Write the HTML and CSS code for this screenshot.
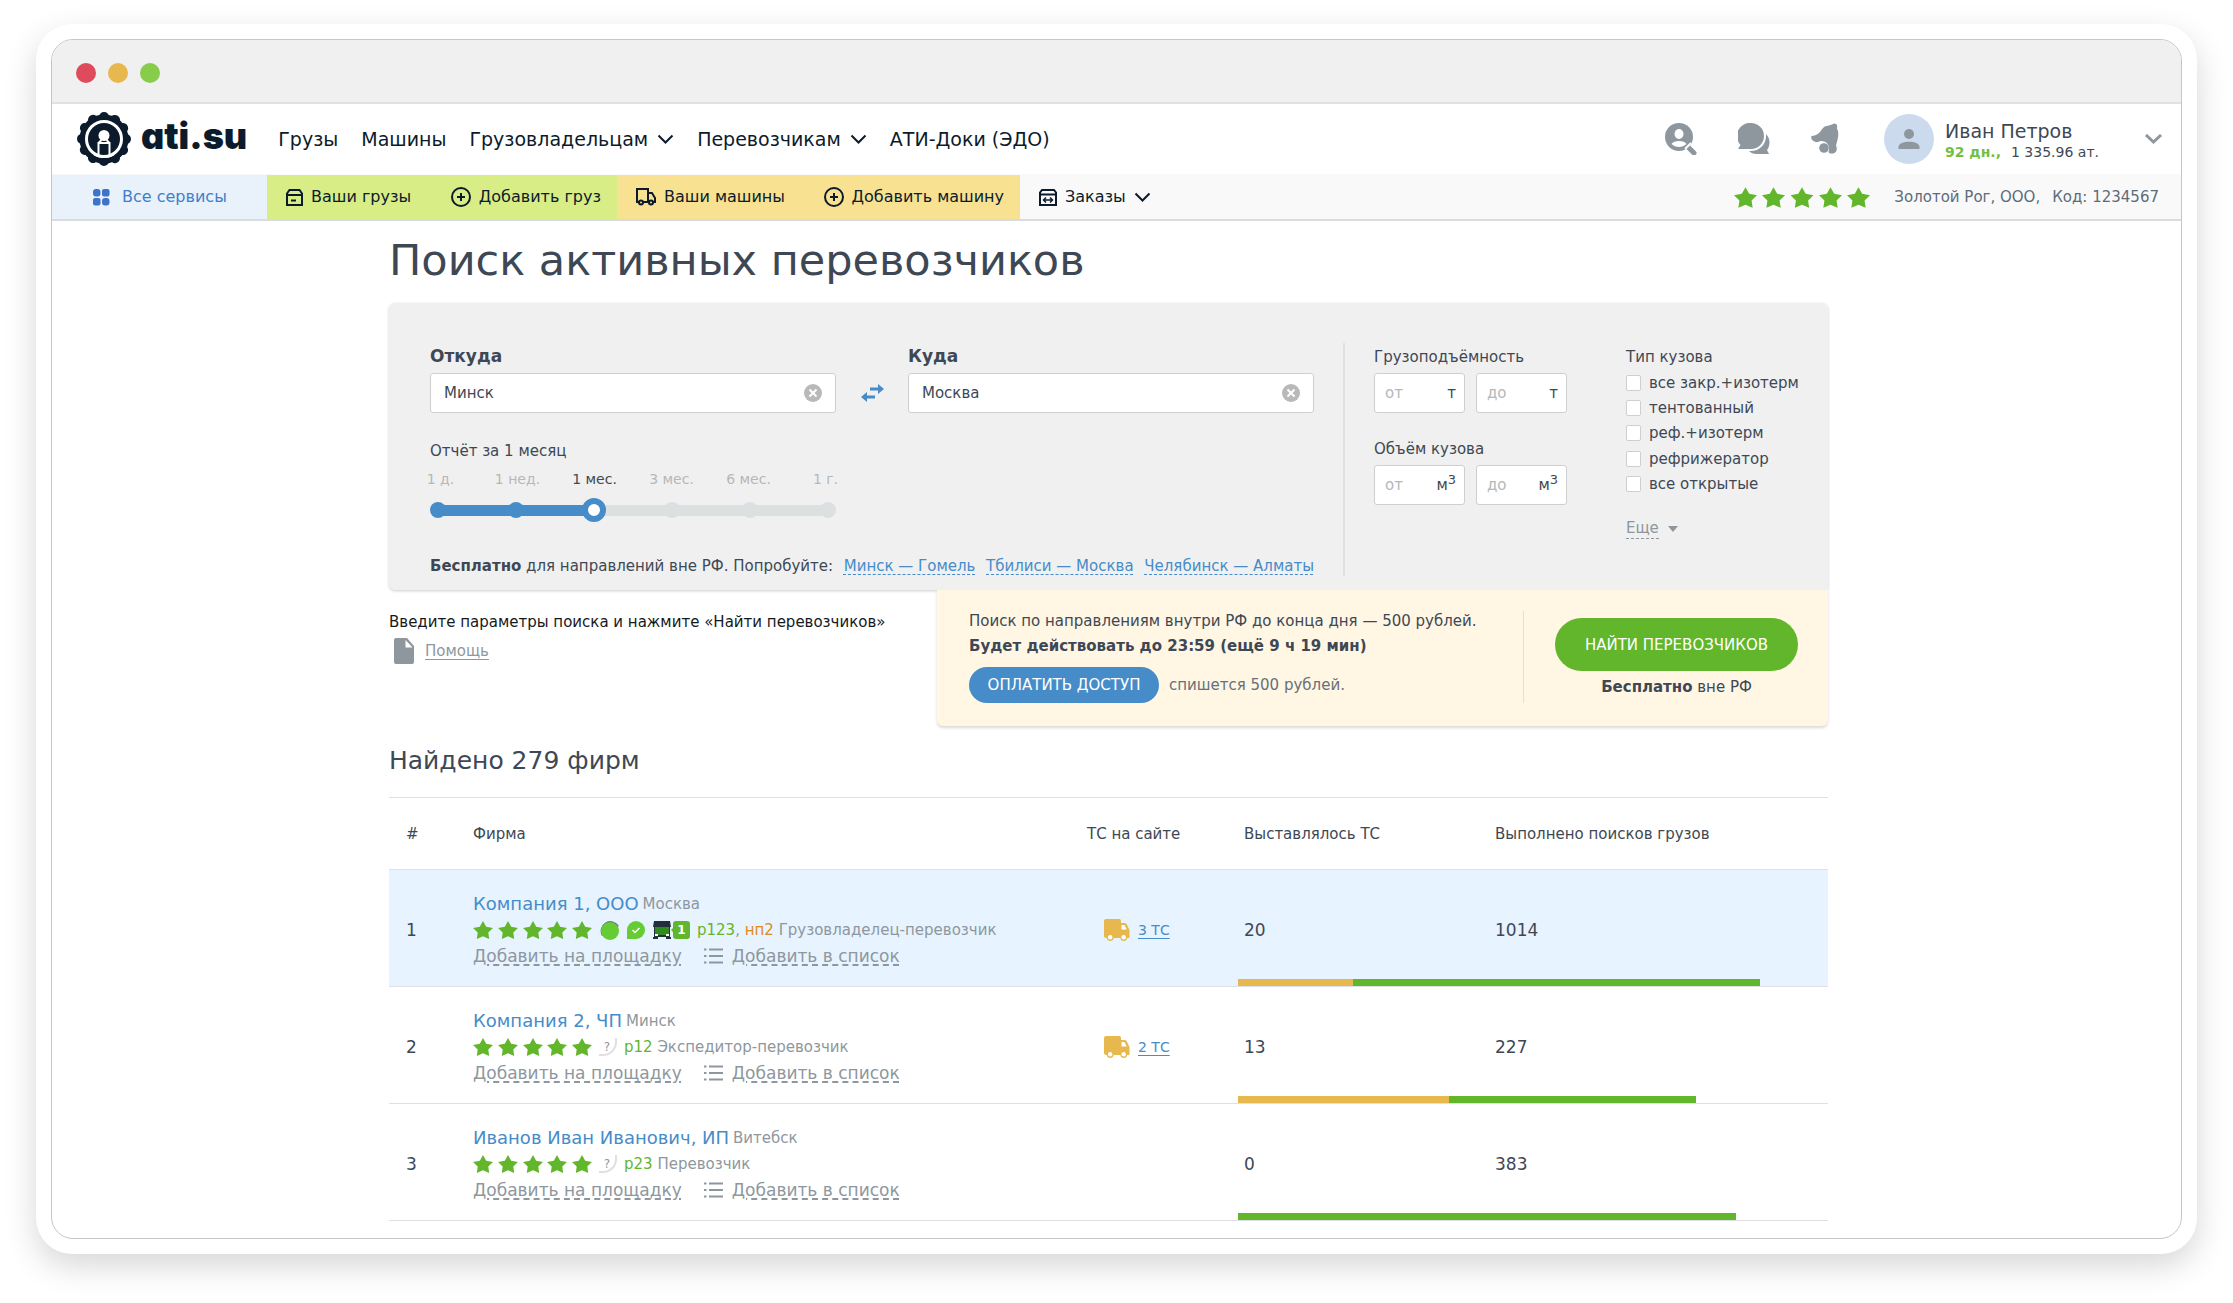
FILE: index.html
```
<!DOCTYPE html>
<html lang="ru">
<head>
<meta charset="utf-8">
<title>Поиск активных перевозчиков</title>
<link rel="stylesheet" href="styles.css">
</head>
<body>
<svg class="sprite" aria-hidden="true">
  <symbol id="star" viewBox="0 0 20 18"><path d="M10 0l3.200 5.800L20 7l-4.700 4.500L16.200 18 10 15.200 3.800 18l.9-6.500L0 7l6.800-1.200z"/></symbol>
  <symbol id="stars" viewBox="0 0 119 18"><use href="#star" width="20" height="18"/><use href="#star" x="25" width="20" height="18"/><use href="#star" x="50" width="20" height="18"/><use href="#star" x="74" width="20" height="18"/><use href="#star" x="99" width="20" height="18"/></symbol>
  <symbol id="chevron" viewBox="0 0 17 10"><path d="M1.500 1.500l7 7 7-7" fill="none" stroke="currentColor" stroke-width="2"/></symbol>
  <symbol id="plus" viewBox="0 0 20 20"><circle cx="10" cy="10" r="9" fill="none" stroke="currentColor" stroke-width="2"/><path d="M10 6v8M6 10h8" stroke="currentColor" stroke-width="2"/></symbol>
  <symbol id="clear" viewBox="0 0 18 18"><circle cx="9" cy="9" r="9" fill="#b9b9b9"/><path d="M5.500 5.500l7 7m0-7l-7 7" stroke="#fff" stroke-width="2"/></symbol>
  <symbol id="van" viewBox="0 0 26 22"><path d="M2 0h13a2 2 0 0 1 2 2v2h3.500c1.500 0 2 .8 2.700 2.200L25.500 11v7c0 .8-.5 1-1 1h-1.300a3.500 3.500 0 0 1-6.900 0H9.700a3.500 3.500 0 0 1-6.900 0H2a2 2 0 0 1-2-2V2a2 2 0 0 1 2-2z"/><path d="M17.500 6v4.500h5.200L20.500 6z" fill="#fff"/><circle cx="6.200" cy="18.300" r="2.200" fill="#fff"/><circle cx="19.700" cy="18.300" r="2.200" fill="#fff"/></symbol>
  <symbol id="list" viewBox="0 0 19 16"><path d="M5 1.500h14M5 8h14M5 14.500h14M0 1.500h2.500M0 8h2.500M0 14.500h2.500" stroke="currentColor" stroke-width="2"/></symbol>
</svg>
<div class="frame">
<div class="window">
  <div class="titlebar"><span class="dot dot-red"></span><span class="dot dot-yellow"></span><span class="dot dot-green"></span></div>

  <header class="header">
    <a class="logo" href="#">
      <svg width="54" height="54" viewBox="0 0 54 54"><circle cx="27" cy="27" r="24.500" fill="#0b1b2b"/><circle cx="27" cy="27" r="22" fill="none" stroke="#0b1b2b" stroke-width="10" stroke-linecap="round" pathLength="120" stroke-dasharray=".1 9.900" transform="rotate(-90 27 27)"/><circle cx="27" cy="27" r="17.500" fill="none" stroke="#fff" stroke-width="3"/><circle cx="27" cy="23.500" r="5.500" fill="#fff"/><path d="M21.500 43V31h11v12M21.500 31l3-3M32.500 31l-3-3" fill="none" stroke="#fff" stroke-width="2"/><path d="M17 41.500q10 5 20 0v2q-10 5-20 0z" fill="#fff"/></svg>
      <span>ati.su</span>
    </a>
    <nav class="nav">
      <a href="#">Грузы</a>
      <a href="#">Машины</a>
      <a href="#">Грузовладельцам <svg width="17" height="10"><use href="#chevron"/></svg></a>
      <a href="#">Перевозчикам <svg width="17" height="10"><use href="#chevron"/></svg></a>
      <a href="#">АТИ-Доки (ЭДО)</a>
    </nav>
    <div class="actions">
      <a href="#" aria-label="Поиск фирм"><svg width="32" height="32" viewBox="0 0 32 32"><circle cx="14" cy="14" r="14"/><path d="M23 24l6 6" stroke="#8e979e" stroke-width="5" stroke-linecap="round"/><path d="M20 26l6-6" stroke="#fff" stroke-width="2"/><ellipse cx="14" cy="11" rx="4.500" ry="5" fill="#fff"/><path d="M6.500 21c2-4 13-4 15 0-4 4-11 4-15 0z" fill="#fff"/></svg></a>
      <a href="#" aria-label="Сообщения"><svg width="32" height="31" viewBox="0 0 32 31"><path d="M28 11c5 5 4 12 1 16l2 4H19c-4 0-6-1-8-3 10 1 18-7 17-17z"/><path d="M13 0a13 13 0 1 1 0 26H0l2.500-4A13 13 0 0 1 13 0z"/></svg></a>
      <a href="#" aria-label="Уведомления"><svg width="28" height="31" viewBox="0 0 28 31"><path d="M23 .5c3 0 3.500 2 3 5 3 6 0 12-1 17 2 4 0 8-4 8-3 0-4-1-3-4C19 20 12 16 7 19c-4 1-8-3-6.500-6 6-.5 8-3 11-7.500C14 2 20 3 23 .5z"/><circle cx="13" cy="25" r="4.800"/></svg></a>
    </div>
    <div class="user">
      <svg width="50" height="50" viewBox="0 0 50 50"><circle cx="25" cy="25" r="25" fill="#cbdbed"/><circle cx="25" cy="20" r="5" fill="#8e979e"/><path d="M14.500 35v-2c0-7 21-7 21 0v2z" fill="#8e979e"/></svg>
      <div class="user-text">
        <div class="user-name">Иван Петров</div>
        <div class="user-balance"><b>92 дн.,</b> <span>1 335.96 ат.</span></div>
      </div>
      <button class="plain" type="button" aria-label="Меню"><svg width="17" height="10" viewBox="0 0 17 10"><path d="M1 1l7.500 7L16 1" fill="none" stroke="#8e979e" stroke-width="3"/></svg></button>
    </div>
  </header>

  <div class="toolbar">
    <a class="services" href="#"><svg width="17" height="17" viewBox="0 0 17 17"><rect width="7.500" height="7.500" rx="3"/><rect x="9" width="7.500" height="7.500" rx="2"/><rect y="9" width="7.500" height="7.500" rx="2"/><rect x="9" y="9" width="7.500" height="7.500" rx="3"/></svg>Все сервисы</a>
    <div class="group group-green">
      <a href="#"><svg width="17" height="17" viewBox="0 0 17 17" fill="none" stroke="currentColor" stroke-width="2"><path d="M3.500 1h10L16 4.500V16H1V4.500zM1 6h15M5 11.500h5"/></svg>Ваши грузы</a>
      <a href="#"><svg width="20" height="20"><use href="#plus"/></svg>Добавить груз</a>
    </div>
    <div class="group group-yellow">
      <a href="#"><svg width="20" height="18" viewBox="0 0 20 18" fill="none" stroke="currentColor" stroke-width="2"><path d="M3 14H1V1h11v13H7M12 5h4l3 5v4h-2"/><circle cx="5" cy="14.500" r="2"/><circle cx="15" cy="14.500" r="2"/></svg>Ваши машины</a>
      <a href="#"><svg width="20" height="20"><use href="#plus"/></svg>Добавить машину</a>
    </div>
    <a class="orders" href="#"><svg width="18" height="17" viewBox="0 0 18 17" fill="none" stroke="currentColor" stroke-width="2"><path d="M3 1h12l2 2.500V16H1V3.500zM1 5.500h16"/><path d="M4.500 11h9M7 8.500L4.500 11 7 13.500M11 8.500l2.500 2.500-2.500 2.500" stroke-width="1.500"/></svg>Заказы <svg width="17" height="10"><use href="#chevron"/></svg></a>
    <div class="company">
      <svg class="green" width="136" height="21" viewBox="0 0 136 21"><use href="#star" width="23" height="21"/><use href="#star" x="28" width="23" height="21"/><use href="#star" x="56.500" width="23" height="21"/><use href="#star" x="85" width="23" height="21"/><use href="#star" x="113" width="23" height="21"/></svg>
      <span>Золотой Рог, ООО,</span><span>Код: 1234567</span>
    </div>
  </div>

  <main class="main">
    <h1>Поиск активных перевозчиков</h1>
    <form class="search">
      <div class="panel">
        <div class="route">
          <div class="route-fields">
            <div class="field">
              <label class="strong" for="from">Откуда</label>
              <div class="box"><input id="from" type="text" value="Минск"><button class="plain" type="button" aria-label="Очистить"><svg width="18" height="18"><use href="#clear"/></svg></button></div>
            </div>
            <button class="plain swap" type="button" aria-label="Поменять местами"><svg width="23" height="18" viewBox="0 0 23 18" fill="#468cc9"><path d="M9 3.500h8V0l6 5-6 5V6.500H9zM14 11.500H6V8l-6 5 6 5v-3.500h8z"/></svg></button>
            <div class="field">
              <label class="strong" for="to">Куда</label>
              <div class="box"><input id="to" type="text" value="Москва"><button class="plain" type="button" aria-label="Очистить"><svg width="18" height="18"><use href="#clear"/></svg></button></div>
            </div>
          </div>
          <div class="period">
            <label for="period">Отчёт за 1 месяц</label>
            <div class="period-labels"><span>1 д.</span><span>1 нед.</span><span class="current">1 мес.</span><span>3 мес.</span><span>6 мес.</span><span>1 г.</span></div>
            <div class="slider">
              <div class="ticks"><i class="on"></i><i class="on"></i><i class="on"></i><i></i><i></i><i></i></div>
              <input id="period" type="range" min="0" max="5" value="2">
            </div>
          </div>
          <p class="free"><span><b>Бесплатно</b> для направлений вне РФ. Попробуйте:</span> <a href="#">Минск — Гомель</a> <a href="#">Тбилиси — Москва</a> <a href="#">Челябинск — Алматы</a></p>
        </div>
        <div class="limits">
          <label for="w1">Грузоподъёмность</label>
          <div class="pair">
            <div class="box"><input id="w1" type="text" placeholder="от"><span>т</span></div>
            <div class="box"><input type="text" placeholder="до" aria-label="Грузоподъёмность до"><span>т</span></div>
          </div>
          <label for="v1">Объём кузова</label>
          <div class="pair">
            <div class="box"><input id="v1" type="text" placeholder="от"><span>м<sup>3</sup></span></div>
            <div class="box"><input type="text" placeholder="до" aria-label="Объём кузова до"><span>м<sup>3</sup></span></div>
          </div>
        </div>
        <fieldset class="body-type">
          <legend>Тип кузова</legend>
          <div class="checks">
            <label><input type="checkbox">все закр.+изотерм</label>
            <label><input type="checkbox">тентованный</label>
            <label><input type="checkbox">реф.+изотерм</label>
            <label><input type="checkbox">рефрижератор</label>
            <label><input type="checkbox">все открытые</label>
          </div>
          <button class="plain more" type="button"><span>Еще</span><svg width="10" height="6" viewBox="0 0 10 6"><path d="M0 0h10L5 6z"/></svg></button>
        </fieldset>
      </div>
      <div class="under">
        <div class="hint">
          <p>Введите параметры поиска и нажмите «Найти перевозчиков»</p>
          <a href="#"><svg width="20" height="26" viewBox="0 0 20 26"><path d="M2 0h11l7 8v16a2 2 0 0 1-2 2H2a2 2 0 0 1-2-2V2a2 2 0 0 1 2-2z"/><path d="M11.500 2v7.500h7z" fill="#fff"/></svg><span>Помощь</span></a>
        </div>
        <div class="promo">
          <div class="promo-text">
            <p>Поиск по направлениям внутри РФ до конца дня — 500 рублей.</p>
            <p><b>Будет действовать до 23:59 (ещё 9 ч 19 мин)</b></p>
            <div class="pay"><button class="btn btn-blue" type="button">ОПЛАТИТЬ ДОСТУП</button><span>спишется 500 рублей.</span></div>
          </div>
          <div class="promo-go">
            <button class="btn btn-green" type="submit">НАЙТИ ПЕРЕВОЗЧИКОВ</button>
            <p><b>Бесплатно</b> вне РФ</p>
          </div>
        </div>
      </div>
    </form>

    <h2>Найдено 279 фирм</h2>
    <table class="firms">
      <colgroup><col class="c-num"><col><col class="c-ts"><col class="c-posted"><col class="c-done"></colgroup>
      <thead><tr><th>#</th><th>Фирма</th><th>ТС на сайте</th><th>Выставлялось ТС</th><th>Выполнено поисков грузов</th></tr></thead>
      <tbody>
        <tr class="selected">
          <td>1</td>
          <td class="firm">
            <div class="line title"><a class="name" href="#">Компания 1, ООО</a><span>Москва</span></div>
            <div class="line"><svg class="green" width="119" height="18"><use href="#stars"/></svg>
              <svg width="91" height="20" viewBox="0 0 91 20"><path d="M3 16A9 9 0 1 1 20 6" fill="#6f7680"/><circle cx="11" cy="11" r="9" fill="#66cc33"/><path d="M28 19v-9a9 9 0 1 1 9 9z" fill="#66cc33"/><path d="M33.500 10l2.500 2.500 4.500-4.500" fill="none" stroke="#fff" stroke-width="1.500"/><path d="M55 1h16l1 6h-1v10h1v2h-5v-2h-8v2h-5v-2h1V7h-1z" fill="#22303a"/><path d="M56 7h14v8H56z" fill="#2f8a1f"/><path d="M56 15h3M67 15h3" stroke="#fff" stroke-width="2"/><path d="M77 1h11a3 3 0 0 1 3 3v12a3 3 0 0 1-3 3H77a3 3 0 0 1-3-3v-4l-2-2 2-2V4a3 3 0 0 1 3-3z" fill="#62b62b"/><text x="82.500" y="14" text-anchor="middle" font-size="12" font-weight="bold" fill="#fff">1</text></svg>
              <span><span class="p">р123</span>, <span class="np">нп2</span> Грузовладелец-перевозчик</span></div>
            <div class="line links"><a href="#">Добавить на площадку</a><svg width="19" height="16"><use href="#list"/></svg><a href="#">Добавить в список</a></div>
          </td>
          <td class="ts"><svg width="26" height="22"><use href="#van"/></svg><a href="#">3 ТС</a></td>
          <td>20</td>
          <td>1014<div class="bar"><i class="orange" style="width:19.500%"></i><i style="width:69%"></i></div></td>
        </tr>
        <tr>
          <td>2</td>
          <td class="firm">
            <div class="line title"><a class="name" href="#">Компания 2, ЧП</a><span>Минск</span></div>
            <div class="line"><svg class="green" width="119" height="18"><use href="#stars"/></svg><span class="unknown">?</span><span><span class="p">р12</span> Экспедитор-перевозчик</span></div>
            <div class="line links"><a href="#">Добавить на площадку</a><svg width="19" height="16"><use href="#list"/></svg><a href="#">Добавить в список</a></div>
          </td>
          <td class="ts"><svg width="26" height="22"><use href="#van"/></svg><a href="#">2 ТС</a></td>
          <td>13</td>
          <td>227<div class="bar"><i class="orange" style="width:35.800%"></i><i style="width:41.900%"></i></div></td>
        </tr>
        <tr>
          <td>3</td>
          <td class="firm">
            <div class="line title"><a class="name" href="#">Иванов Иван Иванович, ИП</a><span>Витебск</span></div>
            <div class="line"><svg class="green" width="119" height="18"><use href="#stars"/></svg><span class="unknown">?</span><span><span class="p">р23</span> Перевозчик</span></div>
            <div class="line links"><a href="#">Добавить на площадку</a><svg width="19" height="16"><use href="#list"/></svg><a href="#">Добавить в список</a></div>
          </td>
          <td></td>
          <td>0</td>
          <td>383<div class="bar"><i style="width:84.400%"></i></div></td>
        </tr>
      </tbody>
    </table>
  </main>
</div>
</div>
</body>
</html>
```
FILE: styles.css
```
* { box-sizing: border-box; }
body { margin: 0; padding: 24px 36px 48px; background: #fff; color: #3e4854; font: 15px/20px "DejaVu Sans", Verdana, sans-serif; }
p, h1, h2 { margin: 0; }
svg { display: block; flex: none; }
a { color: inherit; text-decoration: none; }
.sprite { display: none; }
.plain { border: 0; padding: 0; background: none; color: inherit; font: inherit; cursor: pointer; }
.green { fill: #62b62b; }

.frame { padding: 15px; background: #fff; border-radius: 36px; box-shadow: 0 12px 32px rgba(0, 0, 0, .16); }
.window { overflow: hidden; border: 1px solid #c4c6c7; border-radius: 22px; background: #fff; }
.titlebar { display: flex; align-items: center; gap: 12px; height: 64px; padding: 3px 24px 0; background: #f0f0f0; border-bottom: 2px solid #dfe2e4; }
.dot { width: 20px; height: 20px; border-radius: 50%; }
.dot-red { background: #dd4b5c; }
.dot-yellow { background: #e6b84e; }
.dot-green { background: #87cd4b; }

.header { display: flex; align-items: center; height: 70px; padding: 0 19px 0 25px; }
.logo { display: flex; align-items: center; gap: 10px; color: #0b1b2b; }
.logo span { font: 900 36px/40px Inter, sans-serif; font-feature-settings: "cv11"; padding-bottom: 6px; }
.nav { display: flex; gap: 23px; margin-left: 31px; color: #0b1b2b; font-size: 19px; line-height: 24px; }
.nav a { display: flex; align-items: center; gap: 9px; white-space: nowrap; }
.actions { display: flex; gap: 41px; margin-left: auto; fill: #8e979e; }
.user { display: flex; align-items: center; margin-left: 45px; }
.user-text { width: 154px; margin: 2px 46px 0 11px; white-space: nowrap; }
.user-name { font-size: 19px; line-height: 24px; }
.user-balance { display: flex; justify-content: space-between; font-size: 14px; line-height: 18px; }
.user-balance b { color: #73bf45; }

.toolbar { display: flex; height: 47px; padding-top: 1px; background: #f9f9f9; border-bottom: 2px solid #d9dcde; color: #0b1b2b; font-size: 16px; line-height: 20px; white-space: nowrap; }
.toolbar a { display: flex; align-items: center; gap: 8px; }
.toolbar .services { gap: 12px; width: 215px; padding-left: 41px; background: #e9f1fa; color: #3f7fcb; fill: #3d74c9; }
.group { display: flex; justify-content: space-between; padding: 0 16px 0 19px; }
.group-green { width: 350px; background: #d9ed86; }
.group-yellow { width: 403px; background: #f8e191; }
.orders { padding-left: 19px; }
.company { display: flex; align-items: center; gap: 12px; margin-left: auto; padding-right: 22px; color: #5c6c7a; font-size: 15px; }
.company svg { margin-right: 12px; }

.main { max-width: 1455px; margin: 0 auto; padding: 14px 16px 17px 0; }
h1 { margin-bottom: 18px; font-size: 43px; line-height: 50px; font-weight: 400; }
.panel { display: grid; grid-template-columns: minmax(0, 1fr) 253px 233px; padding: 40px 28px 14px 41px; background: #f0f0f0; border-radius: 6px 6px 0 6px; box-shadow: 0 1px 3px rgba(0, 0, 0, .2); }
.route { padding-top: 3px; }
.route-fields { display: flex; align-items: flex-end; }
.field { flex: 1; }
label { display: block; }
.strong { font-size: 17px; font-weight: 700; }
.box { display: flex; align-items: center; min-width: 0; height: 40px; margin-top: 7px; padding: 0 13px; border: 1px solid #cfcfcf; border-radius: 3px; background: #fff; }
.box input { flex: 1; min-width: 0; border: 0; padding: 0; background: none; outline: 0; color: inherit; font: inherit; }
.swap { display: flex; align-items: center; justify-content: center; width: 72px; height: 40px; }
.period { width: 406px; margin-top: 28px; }
.period-labels { display: grid; grid-template-columns: repeat(6, 1fr); margin: 8px -28px 9px; color: #b5b8ba; font-size: 14px; text-align: center; }
.period-labels .current { color: #3e4854; }
.slider { display: grid; align-items: center; }
.slider > * { grid-area: 1 / 1; }
.ticks { display: flex; justify-content: space-between; border-radius: 8px; background: linear-gradient(90deg, #468cc9 40%, #dde0e0 40%) center / calc(100% - 8px) 11px no-repeat; }
.ticks i { width: 16px; height: 16px; border-radius: 50%; background: #dde0e0; }
.ticks .on { background: #468cc9; }
.slider input { appearance: none; width: calc(100% + 8px); height: 24px; margin: 0 -4px; background: none; }
.slider input::-webkit-slider-thumb { appearance: none; width: 24px; height: 24px; border: 6px solid #468cc9; border-radius: 50%; background: #fff; }
.free { display: flex; justify-content: space-between; margin-top: 34px; white-space: nowrap; }
.free a { color: #468cc9; text-decoration: underline dashed 1px; text-underline-offset: 3px; }
.limits { margin-left: 29px; padding: 4px 0 0 29px; border-left: 2px solid #dfe1e3; }
.pair { display: grid; grid-template-columns: minmax(0, 1fr) minmax(0, 1fr); gap: 11px; margin-bottom: 26px; }
.pair .box { margin-top: 6px; padding: 0 8px 0 10px; }
.pair input::placeholder { color: #b5b8ba; opacity: 1; }
sup { font-size: 13px; line-height: 0; }
.body-type { min-width: 0; margin: 0 0 0 59px; border: 0; padding: 4px 0 0; white-space: nowrap; }
.body-type legend { float: left; margin-bottom: 3px; padding: 0; }
.checks { display: grid; clear: both; height: 127px; margin-bottom: 21px; }
.checks label { display: flex; align-items: center; gap: 8px; }
.checks input { appearance: none; width: 15px; height: 16px; margin: 0; border: 1px solid #cfcfcf; border-radius: 2px; background: #fff; }
.more { display: flex; align-items: center; gap: 9px; color: #8e979e; fill: #8e979e; }
.more span { border-bottom: 1px dashed #8e979e; }

.under { display: flex; justify-content: space-between; align-items: flex-start; }
.hint { padding-top: 22px; color: #16191c; }
.hint a { display: inline-flex; align-items: center; gap: 11px; margin: 6px 0 0 5px; color: #8e979e; fill: #8e979e; }
.hint span { text-decoration: underline; text-underline-offset: 3px; }
.promo { display: flex; position: relative; width: 891px; padding: 19px 30px 23px 32px; background: #fff6e4; border-radius: 0 0 6px 6px; box-shadow: 0 2px 3px rgba(0, 0, 0, .15); }
.promo-text { flex: 1; line-height: 25px; }
.pay { display: flex; align-items: center; gap: 10px; margin-top: 8px; color: #66707a; }
.btn { border: 0; padding: 0; border-radius: 27px; color: #fff; font: inherit; white-space: nowrap; cursor: pointer; }
.btn-blue { width: 190px; height: 36px; background: #468cc9; }
.btn-green { width: 243px; height: 53px; margin-bottom: 6px; background: #62b62b; }
.promo-go { margin-top: 2px; padding: 7px 0 0 31px; border-left: 1px solid #e5e0d3; text-align: center; }

h2 { margin: 20px 0 21px; font-size: 25px; line-height: 30px; font-weight: 400; }
.firms { width: 100%; table-layout: fixed; border-collapse: separate; border-spacing: 0; border-top: 1px solid #dde1e5; }
.c-num { width: 78px; }
.c-ts { width: 157px; }
.c-posted { width: 251px; }
.c-done { width: 339px; }
th { height: 72px; padding: 0 6px; border-bottom: 1px solid #dde1e5; font-weight: 400; text-align: left; }
td { height: 117px; padding: 4px 6px 0; border-bottom: 1px solid #dde1e5; font-size: 17px; }
th:first-child, td:first-child { padding-left: 17px; }
tbody tr { position: relative; }
.selected { background: #e7f3fe; }
td.firm { color: #8e979e; font-size: 15px; }
.line { display: flex; align-items: center; gap: 7px; height: 26px; line-height: 26px; white-space: nowrap; }
.title { gap: 4px; }
.name { color: #468cc9; font-size: 18px; }
.unknown { width: 18px; height: 18px; border-right: 2px solid #e0e0e0; border-bottom: 2px solid #e0e0e0; border-radius: 0 0 14px 0; font-size: 12px; line-height: 18px; text-align: center; }
.p { color: #62b62b; }
.np { color: #db8a1f; }
.links { gap: 22px; font-size: 17px; }
.links svg + a { margin-left: -13px; }
.links a { text-decoration: underline dashed 2px; text-underline-offset: 2px; }
.ts svg { display: inline-block; margin: 0 8px 0 17px; fill: #e6b84e; vertical-align: middle; }
.ts a { color: #468cc9; font-size: 14px; text-decoration: underline; text-underline-offset: 3px; }
.bar { display: flex; position: absolute; right: 0; bottom: 1px; width: 590px; height: 7px; }
.bar i { background: #62b62b; }
.bar .orange { background: #e6b84e; }
```
